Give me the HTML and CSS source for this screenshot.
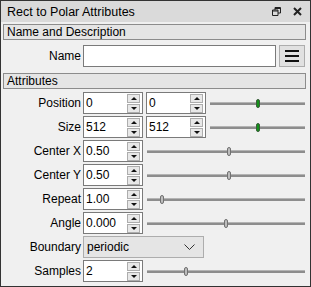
FILE: index.html
```html
<!DOCTYPE html>
<html lang="en">
<head>
    <meta charset="UTF-8">
    <title>Rect to Polar Attributes</title>
    <link rel="stylesheet" href="styles.css">
</head>
<body>
    <div class="panel">
        <div class="title-bar">
            <span class="title">Rect to Polar Attributes</span>
            <span class="title-btn">
                <svg width="9" height="9" viewBox="0 0 9 9"><path d="M3 .5h5.5V6M.5 3h5.5v5.5H.5z M3 .5V3 M8.5 6H6" fill="none" stroke="#222" stroke-width="1"/><path d="M3 1.5h5.5M.5 4h5.5" stroke="#222" stroke-width="1"/></svg>
            </span>
            <span class="title-btn">
                <svg width="9" height="9" viewBox="0 0 9 9"><path d="M1 1l7 7M8 1l-7 7" stroke="#222" stroke-width="2"/></svg>
            </span>
        </div>

        <div class="content">
            <div class="section">Name and Description</div>
            <div class="grid name-grid">
                <label>Name</label>
                <div class="name-field">
                    <div class="text-input"></div>
                    <div class="menu-btn">
                        <svg width="14" height="12" viewBox="0 0 14 12"><path d="M0 1h14M0 6h14M0 11h14" stroke="#111" stroke-width="2"/></svg>
                    </div>
                </div>
            </div>

            <div class="section">Attributes</div>
            <div class="grid attr-grid">
                <label>Position</label>
                <div class="field">
                    <div class="spin"><span>0</span><i class="arrows"><b class="up"></b><b class="down"></b></i></div>
                    <div class="spin"><span>0</span><i class="arrows"><b class="up"></b><b class="down"></b></i></div>
                    <div class="slider"><em class="handle green" style="left: 48px"></em></div>
                </div>

                <label>Size</label>
                <div class="field">
                    <div class="spin"><span>512</span><i class="arrows"><b class="up"></b><b class="down"></b></i></div>
                    <div class="spin"><span>512</span><i class="arrows"><b class="up"></b><b class="down"></b></i></div>
                    <div class="slider"><em class="handle green" style="left: 48px"></em></div>
                </div>

                <label>Center X</label>
                <div class="field">
                    <div class="spin"><span>0.50</span><i class="arrows"><b class="up"></b><b class="down"></b></i></div>
                    <div class="slider"><em class="handle" style="left: 82px"></em></div>
                </div>

                <label>Center Y</label>
                <div class="field">
                    <div class="spin"><span>0.50</span><i class="arrows"><b class="up"></b><b class="down"></b></i></div>
                    <div class="slider"><em class="handle" style="left: 82px"></em></div>
                </div>

                <label>Repeat</label>
                <div class="field">
                    <div class="spin"><span>1.00</span><i class="arrows"><b class="up"></b><b class="down"></b></i></div>
                    <div class="slider"><em class="handle" style="left: 15px"></em></div>
                </div>

                <label>Angle</label>
                <div class="field">
                    <div class="spin"><span>0.000</span><i class="arrows"><b class="up"></b><b class="down"></b></i></div>
                    <div class="slider"><em class="handle" style="left: 79px"></em></div>
                </div>

                <label>Boundary</label>
                <div class="field">
                    <div class="combo">
                        <span>periodic</span>
                        <svg width="11" height="6" viewBox="0 0 11 6"><path d="M.5 .5l5 5 5-5" fill="none" stroke="#333" stroke-width="1"/></svg>
                    </div>
                </div>

                <label>Samples</label>
                <div class="field">
                    <div class="spin"><span>2</span><i class="arrows"><b class="up"></b><b class="down"></b></i></div>
                    <div class="slider"><em class="handle" style="left: 39px"></em></div>
                </div>
            </div>
        </div>
    </div>
</body>
</html>
```

FILE: styles.css
```css
body {
    margin: 0;
    font-family: 'Liberation Sans', Arial, sans-serif;
    font-size: 12px;
    color: #000;
    background-color: #f0f0f0;
}
.panel {
    width: 311px;
    height: 287px;
    box-sizing: border-box;
    border: 1px solid #333;
    background-color: #f0f0f0;
}
.title-bar {
    display: flex;
    align-items: center;
    height: 21px;
    padding: 0 8px 0 6px;
    background-color: #dadada;
    gap: 12px;
}
.title {
    flex: 1;
    font-size: 12.5px;
}
.title-btn {
    display: flex;
}
.content {
    padding: 2px 4px 0 2px;
}
.section {
    height: 14px;
    line-height: 14px;
    padding: 0 3px;
    border: 1px solid #8c8c8c;
    background-color: #e5e5e5;
}
.grid {
    display: grid;
    grid-template-columns: 78px 1fr;
    column-gap: 2px;
    row-gap: 2px;
    align-items: center;
}
.name-grid {
    margin: 5px 0 6px;
}
.attr-grid {
    margin-top: 3px;
}
label {
    text-align: right;
}
.name-field {
    display: flex;
    gap: 3px;
}
.text-input {
    width: 191px;
    height: 20px;
    border: 1px solid #7a7a7a;
    background-color: #fff;
}
.menu-btn {
    width: 24px;
    height: 20px;
    border: 1px solid #adadad;
    background-color: #e1e1e1;
    display: flex;
    align-items: center;
    justify-content: center;
}
.field {
    display: flex;
    align-items: center;
    gap: 3px;
    height: 22px;
}
.spin {
    position: relative;
    flex: none;
    width: 56px;
    height: 20px;
    padding-left: 2px;
    border: 1px solid #7a7a7a;
    background-color: #fff;
    display: flex;
    align-items: center;
}
.arrows {
    position: absolute;
    right: 2px;
    top: 1px;
    width: 13px;
    display: flex;
    flex-direction: column;
    gap: 1px;
}
.arrows b {
    height: 7px;
    border: 1px solid #adadad;
    background-color: #e8e8e8;
    display: flex;
    align-items: center;
    justify-content: center;
}
.arrows b::after {
    content: '';
    border-left: 3px solid transparent;
    border-right: 3px solid transparent;
}
.arrows .up::after {
    border-bottom: 3px solid #111;
}
.arrows .down::after {
    border-top: 3px solid #111;
}
.slider {
    position: relative;
    flex: 1;
    height: 2px;
    margin: 0 1px;
    background-color: #8d8d8d;
    border-top: 1px solid #b4b4b4;
}
.handle {
    position: absolute;
    top: -4px;
    width: 2px;
    height: 7px;
    margin-left: -2px;
    border: 1px solid #727272;
    border-radius: 2px;
    background-color: #bdbdbd;
}
.handle.green {
    border-color: #3b5e3b;
    background-color: #14921a;
}
.combo {
    width: 108px;
    height: 20px;
    padding: 0 8px 0 3px;
    border: 1px solid #adadad;
    background-color: #e5e5e5;
    display: flex;
    align-items: center;
    justify-content: space-between;
}
```
